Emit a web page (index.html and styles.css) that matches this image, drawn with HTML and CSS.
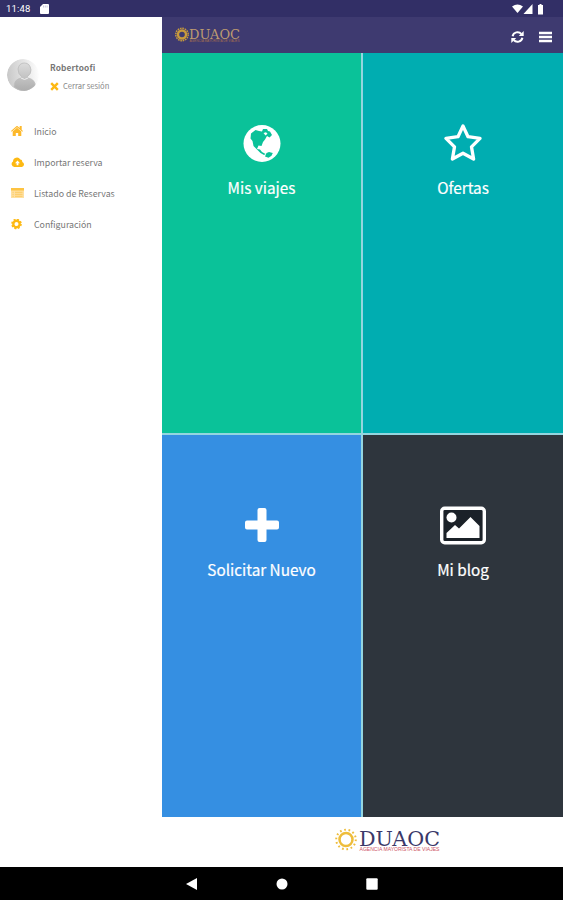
FILE: index.html
```html
<!DOCTYPE html>
<html lang="es">
<head>
<meta charset="utf-8">
<title>DUAOC</title>
<link rel="stylesheet" href="styles.css">
</head>
<body>
<div class="screen">
  <div class="status">
    <span class="clock">11:48</span>
    <svg class="sd" width="9" height="10" viewBox="0 0 9 10"><path d="M3 0h5q1 0 1 1v8q0 1-1 1H1q-1 0-1-1V3z" fill="#fff"/><path d="M3.500 1.500v2M5.300 1.500v2M7.100 1.500v2" stroke="#b5b3cf" stroke-width=".7"/></svg>
    <svg class="signals" width="34" height="11" viewBox="0 0 34 11" fill="#fff"><path d="M1 2.500Q6.500 -1.500 12 2.500L6.500 9z"/><path d="M21.500 0v10H12.500z"/><path d="M27 1h1.500V0h2v1H32v9.500h-5V1z"/></svg>
  </div>
  <div class="main">
    <aside class="sidebar">
      <div class="profile">
        <svg class="avatar" width="34" height="34" viewBox="0 0 34 34">
          <defs>
            <linearGradient id="disc" x1="0" y1="0.300" x2="1" y2="0.200"><stop offset="0" stop-color="#c9c9c9"/><stop offset=".55" stop-color="#e6e6e6"/><stop offset="1" stop-color="#fff"/></linearGradient>
            <linearGradient id="body" x1="0" y1="0" x2="0" y2="1"><stop offset="0" stop-color="#dcdcdc"/><stop offset="1" stop-color="#acacac"/></linearGradient>
            <clipPath id="round"><circle cx="17" cy="17" r="16"/></clipPath>
          </defs>
          <g clip-path="url(#round)"><circle cx="17" cy="17" r="16" fill="url(#disc)"/>
          <path d="M12 11Q13 5 18.500 5T25 12Q25 16 21.500 18.500V20Q29.500 21 29.500 29Q24 33 18.500 33T8 29Q8 21 15.500 20V18.500Q12 16 12 11z" fill="url(#body)" stroke="#bbb" stroke-width=".8"/>
          <path d="M15 20q3.500 3 7 0" fill="none" stroke="#eee"/></g>
        </svg>
        <div class="who">
          <div class="name">Robertoofi</div>
          <div class="logout"><svg width="9" height="9" viewBox="0 0 9 9"><path d="M1.200 1.200l6.600 6.600M7.800 1.200L1.200 7.800" stroke="#fdb913" stroke-width="2.400"/></svg><span>Cerrar sesión</span></div>
        </div>
      </div>
      <nav class="menu">
        <a><svg width="14" height="12" viewBox="0 0 14 12" fill="#fdb92b"><path d="M0 5L6 -.3 8.700 2V0h2v3.800L12 5l-.7.700L6 1.300.7 5.700z"/><path d="M1.700 5.500L6 1.800l4.300 3.700V10H7.200V7H4.800v3H1.700z"/></svg><span>Inicio</span></a>
        <a><svg width="14" height="12" viewBox="0 0 14 12"><path d="M3.300 10A3 3 0 0 1 2 4.500 3.900 3.900 0 0 1 9.300 2.600 2.200 2.200 0 0 1 11.300 5 2.600 2.600 0 0 1 11 10z" fill="#fdb913"/><path d="M6.500 3.600L9 6.200H7.400v2.100H5.600V6.200H4z" fill="#fff"/></svg><span>Importar reserva</span></a>
        <a><svg width="14" height="12" viewBox="0 0 14 12"><path d="M0 0h13v10H0z" fill="#fee0a2"/><path d="M0 0h13v2.500H0z" fill="#fdc342"/><path d="M1.500 4.300h1.300M4 4.300h7.500M1.500 6.300h1.300M4 6.300h7.500M1.500 8.300h1.300M4 8.300h7.500" stroke="#fdc95b" stroke-width=".9"/></svg><span>Listado de Reservas</span></a>
        <a><svg width="14" height="12" viewBox="0 0 14 12"><g fill="none" stroke="#fdb913"><circle cx="5.500" cy="5" r="3.200" stroke-width="2.400"/><circle cx="5.500" cy="5" r="4.500" stroke-width="1.600" stroke-dasharray="2 1.534"/></g></svg><span>Configuración</span></a>
      </nav>
    </aside>
    <section class="content">
      <header class="bar">
        <svg class="logo" width="68" height="18" viewBox="0 0 68 18">
          <g fill="none" stroke="#c99b3c"><circle cx="8" cy="8.500" r="4" stroke-width="2.400"/><circle cx="8" cy="8.500" r="6.200" stroke-width="1.500" stroke-dasharray="1.600 .8"/></g>
          <text class="slab" x="15" y="12.800" font-size="13" textLength="51" lengthAdjust="spacingAndGlyphs" fill="#bd9b70">DUAOC</text>
          <text class="sans" x="15.500" y="15.800" font-size="2.600" textLength="50" lengthAdjust="spacingAndGlyphs" fill="#a5704f">AGENCIA MAYORISTA DE VIAJES</text>
        </svg>
        <div class="actions">
          <svg width="13" height="14" viewBox="0 0 13 14"><g fill="none" stroke="#fff" stroke-width="2"><path d="M1.600 6.200A5 5 0 0 1 10.300 4"/><path d="M11.400 7.800A5 5 0 0 1 2.700 10"/></g><path d="M12.700 1v5H7.800zM.3 13V8h4.900z" fill="#fff"/></svg>
          <svg width="13" height="14" viewBox="0 0 13 14"><path d="M0 3h13M0 7h13M0 11h13" stroke="#fff" stroke-width="2.400"/></svg>
        </div>
      </header>
      <div class="tiles">
        <div class="tile green">
          <svg width="46" height="40" viewBox="0 0 46 40"><circle cx="23" cy="19.500" r="18.500" fill="#fff"/><path d="M12 9.500L16.500 6 20 7 23 7.500 24 5 28 5 29 7 31 7.500 33 11 30.500 13.500 28 12 26 15.500 24 18 22.500 22 19.500 21.500 18 25 21 25.500 23 28 26.500 30 25 31 21.500 29 17 24.500 14.500 22 13.500 17 11.500 14.500z" fill="#0ac299"/><path d="M24.500 9l2.500-.8 1.500 1.500-2 1.800z" fill="#fff"/><path d="M27.500 29l2.500-1 3.800 1-1.300 2.800-3 2-3.500-1.300z" fill="#0ac299"/></svg>
          <span>Mis viajes</span>
        </div>
        <div class="tile teal">
          <svg width="46" height="40" viewBox="0 0 46 40"><path d="M23 2L28 12.700 40 14.400 31.500 22.900 33.600 35 23 29.200 12.400 35l2.100-12.100L6 14.400l12-1.700z" fill="none" stroke="#fff" stroke-width="3.300" stroke-linejoin="round"/></svg>
          <span>Ofertas</span>
        </div>
        <div class="tile blue">
          <svg width="46" height="40" viewBox="0 0 46 40"><path d="M20.500 2h5q2 0 2 2v10.500H38q2 0 2 2v5q0 2-2 2H27.500V34q0 2-2 2h-5q-2 0-2-2V23.500H8q-2 0-2-2v-5q0-2 2-2h10.500V4q0-2 2-2z" fill="#fff"/></svg>
          <span>Solicitar Nuevo</span>
        </div>
        <div class="tile dark">
          <svg width="46" height="40" viewBox="0 0 46 40"><rect x="1.700" y="2.200" width="42.600" height="34.600" rx="3" fill="#1b2128" stroke="#fff" stroke-width="3.400"/><circle cx="11.500" cy="11.500" r="5" fill="#fff"/><path d="M6.500 32v-5l8.500-8 4 3.500L30.500 11l9 9v12z" fill="#fff"/></svg>
          <span>Mi blog</span>
        </div>
      </div>
      <footer class="foot">
        <svg width="108" height="26" viewBox="0 0 108 26">
          <g fill="none" stroke="#eebd3b"><circle cx="12" cy="12.500" r="6.500" stroke-width="2.500"/><circle cx="12" cy="12.500" r="9.800" stroke-width="2" stroke-dasharray="1.700 2.704"/></g>
          <text class="slab" x="25" y="18.500" font-size="21" textLength="81" lengthAdjust="spacingAndGlyphs" fill="#3a3869">DUAOC</text>
          <text class="sans" x="25.500" y="23.500" font-size="4.500" textLength="80" lengthAdjust="spacingAndGlyphs" fill="#cd5364">AGENCIA MAYORISTA DE VIAJES</text>
        </svg>
      </footer>
    </section>
  </div>
  <div class="navbar">
    <svg width="12" height="14" viewBox="0 0 12 14"><path d="M0 7L11 1v12z" fill="#fff"/></svg>
    <svg width="12" height="14" viewBox="0 0 12 14"><circle cx="6" cy="7" r="5.500" fill="#fff"/></svg>
    <svg width="12" height="14" viewBox="0 0 12 14"><rect x=".3" y="1.300" width="11.400" height="11.400" rx="1" fill="#fff"/></svg>
  </div>
</div>
</body>
</html>
```
FILE: styles.css
```css
* { box-sizing: border-box; }
body { margin: 0; font-family: "Noto Sans CJK JP", "Noto Sans", sans-serif; }
svg { display: block; flex: none; }
.screen { width: 563px; height: 900px; display: flex; flex-direction: column; background: #fff; overflow: hidden; }
.status { height: 17px; flex: none; background: #322f66; color: #fff; display: flex; align-items: center; padding: 1px 18px 0 6px; }
.clock { font: 400 9.500px/12px Roboto, sans-serif; width: 34px; letter-spacing: .2px; }
.signals { margin-left: auto; }
.main { flex: 1; display: flex; min-height: 0; }
.sidebar { width: 162px; flex: none; background: #fff; color: #777; padding-top: 41px; }
.profile { display: flex; gap: 10px; padding-left: 6px; height: 58px; }
.name { font-size: 8.300px; font-weight: 700; line-height: 12px; margin-top: 3px; letter-spacing: .15px; color: #777; }
.logout { display: flex; align-items: center; gap: 4px; font-size: 7.600px; line-height: 12px; margin-top: 7px; white-space: nowrap; color: #888; }
.menu a { display: flex; align-items: center; height: 31px; padding-left: 11px; gap: 9px; font-size: 8.800px; white-space: nowrap; }
.content { flex: 1; display: flex; flex-direction: column; min-width: 0; }
.bar { height: 36px; flex: none; background: #3e3a70; display: flex; align-items: center; justify-content: space-between; padding: 0 11px 0 12px; }
.actions { display: flex; gap: 15px; padding-top: 4px; }
.slab { font-family: "DejaVu Serif", serif; }
.sans { font-family: "Liberation Sans", sans-serif; }
.tiles { flex: 1; display: grid; grid-template-columns: 199px 1fr; grid-template-rows: 380px 1fr; gap: 2px; background: #94d5df; }
.tile { display: flex; flex-direction: column; align-items: center; padding-top: 71px; color: #fff; font-size: 15.300px; line-height: 24px; font-weight: 400; -webkit-text-stroke: .2px #fff; }
.tile span { margin-top: 11px; }
.green { background: #0ac299; }
.teal { background: #00adb1; }
.blue { background: #358fe2; }
.dark { background: #2e353d; }
.foot { height: 50px; flex: none; background: #fff; display: flex; justify-content: center; padding: 10px 0 0 50px; }
.navbar { height: 33px; flex: none; background: #000; display: flex; align-items: center; justify-content: center; gap: 78px; }
```
